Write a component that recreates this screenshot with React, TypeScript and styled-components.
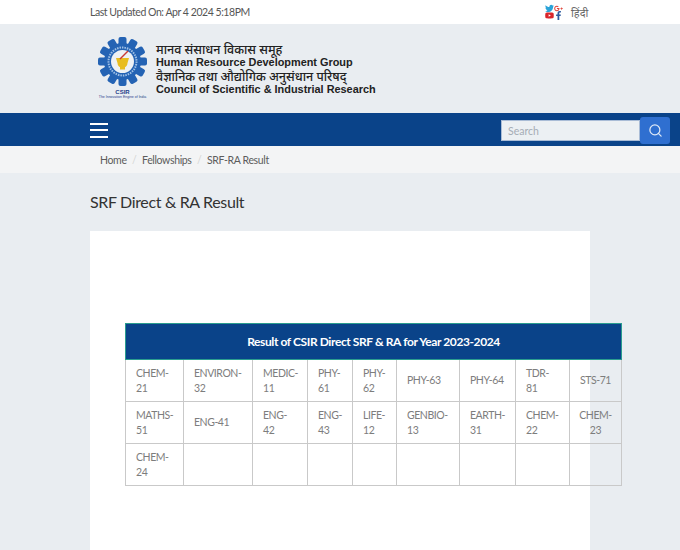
import React from 'react';
import styled, { createGlobalStyle } from 'styled-components';
import { FaTwitter, FaGooglePlusG, FaYoutube, FaFacebookF } from 'react-icons/fa';
import { Search } from 'lucide-react';

const GlobalStyle = createGlobalStyle`
  html, body {
    margin: 0;
    padding: 0;
    height: 550px;
    overflow: hidden;
    background: #e9edf1;
    font-family: Lato, "Open Sans", sans-serif;
  }
  * { box-sizing: border-box; }
`;

const TopBar = styled.div`
  height: 24px;
  background: #fff;
  padding-left: 90px;
  display: flex;
  align-items: center;
  font-size: 10.5px;
  letter-spacing: -0.45px;
  color: #555;
`;

const Updated = styled.span`
  width: 455px;
`;

const Social = styled.div`
  width: 18px;
  display: grid;
  grid-template-columns: 9px 9px;
  grid-auto-rows: 7.5px;
  align-items: center;
  justify-items: center;
  margin-right: 8px;
`;

const SocialIcon = styled.span<{ $color: string }>`
  display: flex;
  color: ${(p) => p.$color};
  font-size: 9px;
`;

const LangLink = styled.span`
  font-family: "Noto Sans", "DejaVu Sans", sans-serif;
  font-size: 11px;
  letter-spacing: 0;
  color: #666;
`;

const Header = styled.header`
  height: 89px;
  padding: 13px 0 0 98px;
  display: flex;
  gap: 9px;
`;

const LogoWrap = styled.div`
  width: 49px;
  display: flex;
  flex-direction: column;
  align-items: center;
`;

const LogoName = styled.span`
  font-size: 6px;
  font-weight: 700;
  color: #27408b;
  line-height: 6px;
  margin-top: 3px;
  font-family: "Liberation Sans", sans-serif;
`;

const LogoTag = styled.span`
  font-size: 3.5px;
  color: #27408b;
  line-height: 5px;
  white-space: nowrap;
  font-family: "Liberation Sans", sans-serif;
`;

const HeaderText = styled.div`
  display: flex;
  flex-direction: column;
  padding-top: 6px;
`;

const HindiLine = styled.div`
  font-family: "Noto Sans", "DejaVu Sans", sans-serif;
  font-size: 12.5px;
  font-weight: 500;
  line-height: 13.4px;
  height: 13.4px;
  color: #222;
  white-space: nowrap;
`;

const EnglishLine = styled.div`
  font-family: "Liberation Sans", sans-serif;
  font-weight: 700;
  font-size: 10.9px;
  line-height: 13.4px;
  color: #222;
  white-space: nowrap;
`;

const NavBar = styled.nav`
  height: 33px;
  background: #0a4389;
  padding: 1px 10px 0 90px;
  display: flex;
  align-items: center;
  justify-content: space-between;
`;

const Burger = styled.div`
  width: 18px;
  display: flex;
  flex-direction: column;
  gap: 4.5px;
  span {
    height: 2px;
    background: #fff;
  }
`;

const SearchBox = styled.div`
  display: flex;
  align-items: center;
`;

const SearchInput = styled.div`
  width: 139px;
  height: 21px;
  background: #ecf0f3;
  border: 1px solid #a9bcd6;
  padding-left: 6px;
  font-size: 10.5px;
  line-height: 20px;
  color: #a5acb5;
`;

const SearchButton = styled.div`
  width: 30px;
  height: 27px;
  background: #2f6fd0;
  border-radius: 3px;
  color: #dfe9f7;
  display: flex;
  align-items: center;
  justify-content: center;
`;

const Crumbs = styled.div`
  height: 27px;
  background: #f3f4f5;
  padding-left: 100px;
  display: flex;
  align-items: center;
  font-size: 10.5px;
  letter-spacing: -0.35px;
  color: #5c5c5c;
`;

const CrumbSep = styled.span`
  color: #d4d4d4;
  padding: 0 5.5px;
`;

const Main = styled.main`
  padding: 0 0 0 90px;
`;

const Title = styled.h1`
  margin: 0;
  padding-top: 20px;
  height: 58px;
  font-size: 16px;
  letter-spacing: -0.35px;
  line-height: 18px;
  font-weight: 400;
  color: #333;
`;

const Card = styled.section`
  width: 500px;
  height: 330px;
  background: #fff;
  padding: 92px 0 0 35px;
`;

const ResultTable = styled.table`
  width: 496px;
  table-layout: fixed;
  border-collapse: collapse;
  font-size: 10.5px;
  letter-spacing: -0.45px;
  color: #7d7d7d;
`;

const HeadCell = styled.th`
  height: 36px;
  background: #0a4389;
  border: 1px solid #2a9d8f;
  color: #fff;
  font-size: 12px;
  letter-spacing: -0.4px;
  font-weight: 700;
  text-align: center;
  padding: 0;
`;

const Cell = styled.td<{ $center?: boolean }>`
  height: 42px;
  border: 1px solid #c9c9c9;
  padding: 1px 0 0 ${(p) => (p.$center ? 0 : 10)}px;
  line-height: 15.5px;
  vertical-align: middle;
  white-space: pre-line;
  text-align: ${(p) => (p.$center ? 'center' : 'left')};
`;

const columns = [58, 69, 55, 45, 44, 63, 56, 54, 52];

const rows: (string | [string, boolean])[][] = [
  ['CHEM-\n21', 'ENVIRON-\n32', 'MEDIC-\n11', 'PHY-\n61', 'PHY-\n62', 'PHY-63', 'PHY-64', 'TDR-\n81', ['STS-71', true]],
  ['MATHS-\n51', 'ENG-41', 'ENG-\n42', 'ENG-\n43', 'LIFE-\n12', 'GENBIO-\n13', 'EARTH-\n31', 'CHEM-\n22', ['CHEM-\n23', true]],
  ['CHEM-\n24', '', '', '', '', '', '', '', ''],
];

const Logo = () => {
  const teeth = Array.from({ length: 12 }, (_, i) => i * 30);
  return (
    <svg width="49" height="49" viewBox="0 0 49 49">
      {teeth.map((a) => (
        <rect key={a} x="20.5" y="0" width="8" height="9" rx="2" fill="#2463b4" transform={`rotate(${a} 24.5 24.5)`} />
      ))}
      <circle cx="24.5" cy="24.5" r="18.5" fill="#2463b4" />
      <circle cx="24.5" cy="24.5" r="14" fill="none" stroke="#9fc0e6" strokeWidth="2" strokeDasharray="1.5 1" />
      <circle cx="24.5" cy="24.5" r="11.5" fill="#eef1f4" />
      <path d="M18 21h13l-1.5 5a5 5 0 0 1-10 0z" fill="#e8bd1f" />
      <rect x="22" y="29" width="5" height="3.5" fill="#e8bd1f" />
      <path d="M22 22L30 14" stroke="#c93a34" strokeWidth="1.5" />
    </svg>
  );
};

const App = () => (
  <>
    <GlobalStyle />
    <TopBar>
      <Updated>Last Updated On: Apr 4 2024 5:18PM</Updated>
      <Social>
        <SocialIcon $color="#2aa3d8"><FaTwitter /></SocialIcon>
        <SocialIcon $color="#e0443a"><FaGooglePlusG /></SocialIcon>
        <SocialIcon $color="#d9252a"><FaYoutube /></SocialIcon>
        <SocialIcon $color="#2d5a9e"><FaFacebookF /></SocialIcon>
      </Social>
      <LangLink>हिंदी</LangLink>
    </TopBar>
    <Header>
      <LogoWrap>
        <Logo />
        <LogoName>CSIR</LogoName>
        <LogoTag>The Innovation Engine of India</LogoTag>
      </LogoWrap>
      <HeaderText>
        <HindiLine>मानव संसाधन विकास समूह</HindiLine>
        <EnglishLine>Human Resource Development Group</EnglishLine>
        <HindiLine>वैज्ञानिक तथा औद्योगिक अनुसंधान परिषद्</HindiLine>
        <EnglishLine>Council of Scientific &amp; Industrial Research</EnglishLine>
      </HeaderText>
    </Header>
    <NavBar>
      <Burger><span /><span /><span /></Burger>
      <SearchBox>
        <SearchInput>Search</SearchInput>
        <SearchButton><Search size={15} /></SearchButton>
      </SearchBox>
    </NavBar>
    <Crumbs>
      Home<CrumbSep>/</CrumbSep>Fellowships<CrumbSep>/</CrumbSep>SRF-RA Result
    </Crumbs>
    <Main>
      <Title>SRF Direct &amp; RA Result</Title>
      <Card>
        <ResultTable>
          <colgroup>
            {columns.map((w, i) => <col key={i} style={{ width: w }} />)}
          </colgroup>
          <thead>
            <tr><HeadCell colSpan={9}>Result of CSIR Direct SRF &amp; RA for Year 2023-2024</HeadCell></tr>
          </thead>
          <tbody>
            {rows.map((row, r) => (
              <tr key={r}>
                {row.map((c, i) =>
                  Array.isArray(c)
                    ? <Cell key={i} $center>{c[0]}</Cell>
                    : <Cell key={i}>{c}</Cell>
                )}
              </tr>
            ))}
          </tbody>
        </ResultTable>
      </Card>
    </Main>
  </>
);

export default App;
